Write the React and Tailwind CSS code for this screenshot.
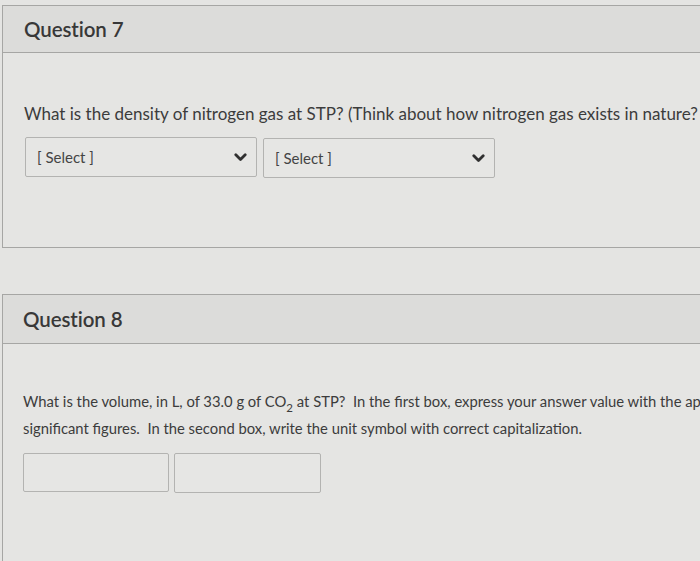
import React from "react";

function Chevron() {
  return (
    <svg width="13" height="9" viewBox="0 0 13 9" className="text-[#303030]">
      <path d="M1.8 1.8 L6.5 6.5 L11.2 1.8" fill="none" stroke="currentColor" strokeWidth="2.8" strokeLinecap="round" strokeLinejoin="round" />
    </svg>
  );
}

function SelectBox({ className }) {
  return (
    <div className={`w-[232px] h-[40px] border border-[#b3b3b1] rounded-[2px] bg-[#e6e6e4] flex items-center justify-between pl-[11px] pr-[9px] ${className}`}>
      <span className="text-[15px] text-[#444]">[ Select ]</span>
      <Chevron />
    </div>
  );
}

export default function App() {
  return (
    <div className="w-[700px] h-[561px] overflow-hidden bg-[#e4e4e2] pt-[5px] pl-[2px] text-[#3c3c3c]" style={{ fontFamily: "Lato, 'Open Sans', sans-serif" }}>
      {/* --- QUESTION 7 --- */}
      <div className="w-[760px] border border-[#a6a6a4] bg-[#e5e5e3]">
        <div className="h-[47px] bg-[#dcdcda] border-b border-[#a6a6a4] flex items-center pl-[21px]">
          <h2 className="text-[20.5px] font-semibold tracking-[-0.1px] text-[#383838]">Question 7</h2>
        </div>
        <div className="h-[194px] pl-[21px] pt-[50px]">
          <p className="text-[17px] whitespace-nowrap leading-[22px]">
            What is the density of nitrogen gas at STP? (Think about how nitrogen gas exists in nature?
          </p>
          <div className="flex items-start gap-[6px] mt-[12px] ml-[1px]">
            <SelectBox />
            <SelectBox className="mt-[1px]" />
          </div>
        </div>
      </div>

      {/* --- QUESTION 8 --- */}
      <div className="w-[760px] mt-[46px] border border-[#a6a6a4] border-b-0 bg-[#e5e5e3] h-[300px]">
        <div className="h-[49px] bg-[#dcdcda] border-b border-[#a6a6a4] flex items-center pl-[20px]">
          <h2 className="text-[20.5px] font-semibold tracking-[-0.1px] text-[#383838]">Question 8</h2>
        </div>
        <div className="pl-[20px] pt-[44px]">
          <p className="text-[14.8px] leading-[27px] whitespace-nowrap">
            What is the volume, in L, of 33.0 g of CO<sub className="text-[11.5px] align-[-2px]">2</sub> at STP?&nbsp; In the first box, express your answer value with the ap
          </p>
          <p className="text-[14.8px] leading-[27px] whitespace-nowrap">
            significant figures.&nbsp; In the second box, write the unit symbol with correct capitalization.
          </p>
          <div className="flex gap-[5px] mt-[11px]">
            <div className="w-[146px] h-[39px] border border-[#b3b3b1] rounded-[2px] bg-[#e6e6e4]"></div>
            <div className="w-[147px] h-[40px] border border-[#b3b3b1] rounded-[2px] bg-[#e6e6e4]"></div>
          </div>
        </div>
      </div>
    </div>
  );
}
